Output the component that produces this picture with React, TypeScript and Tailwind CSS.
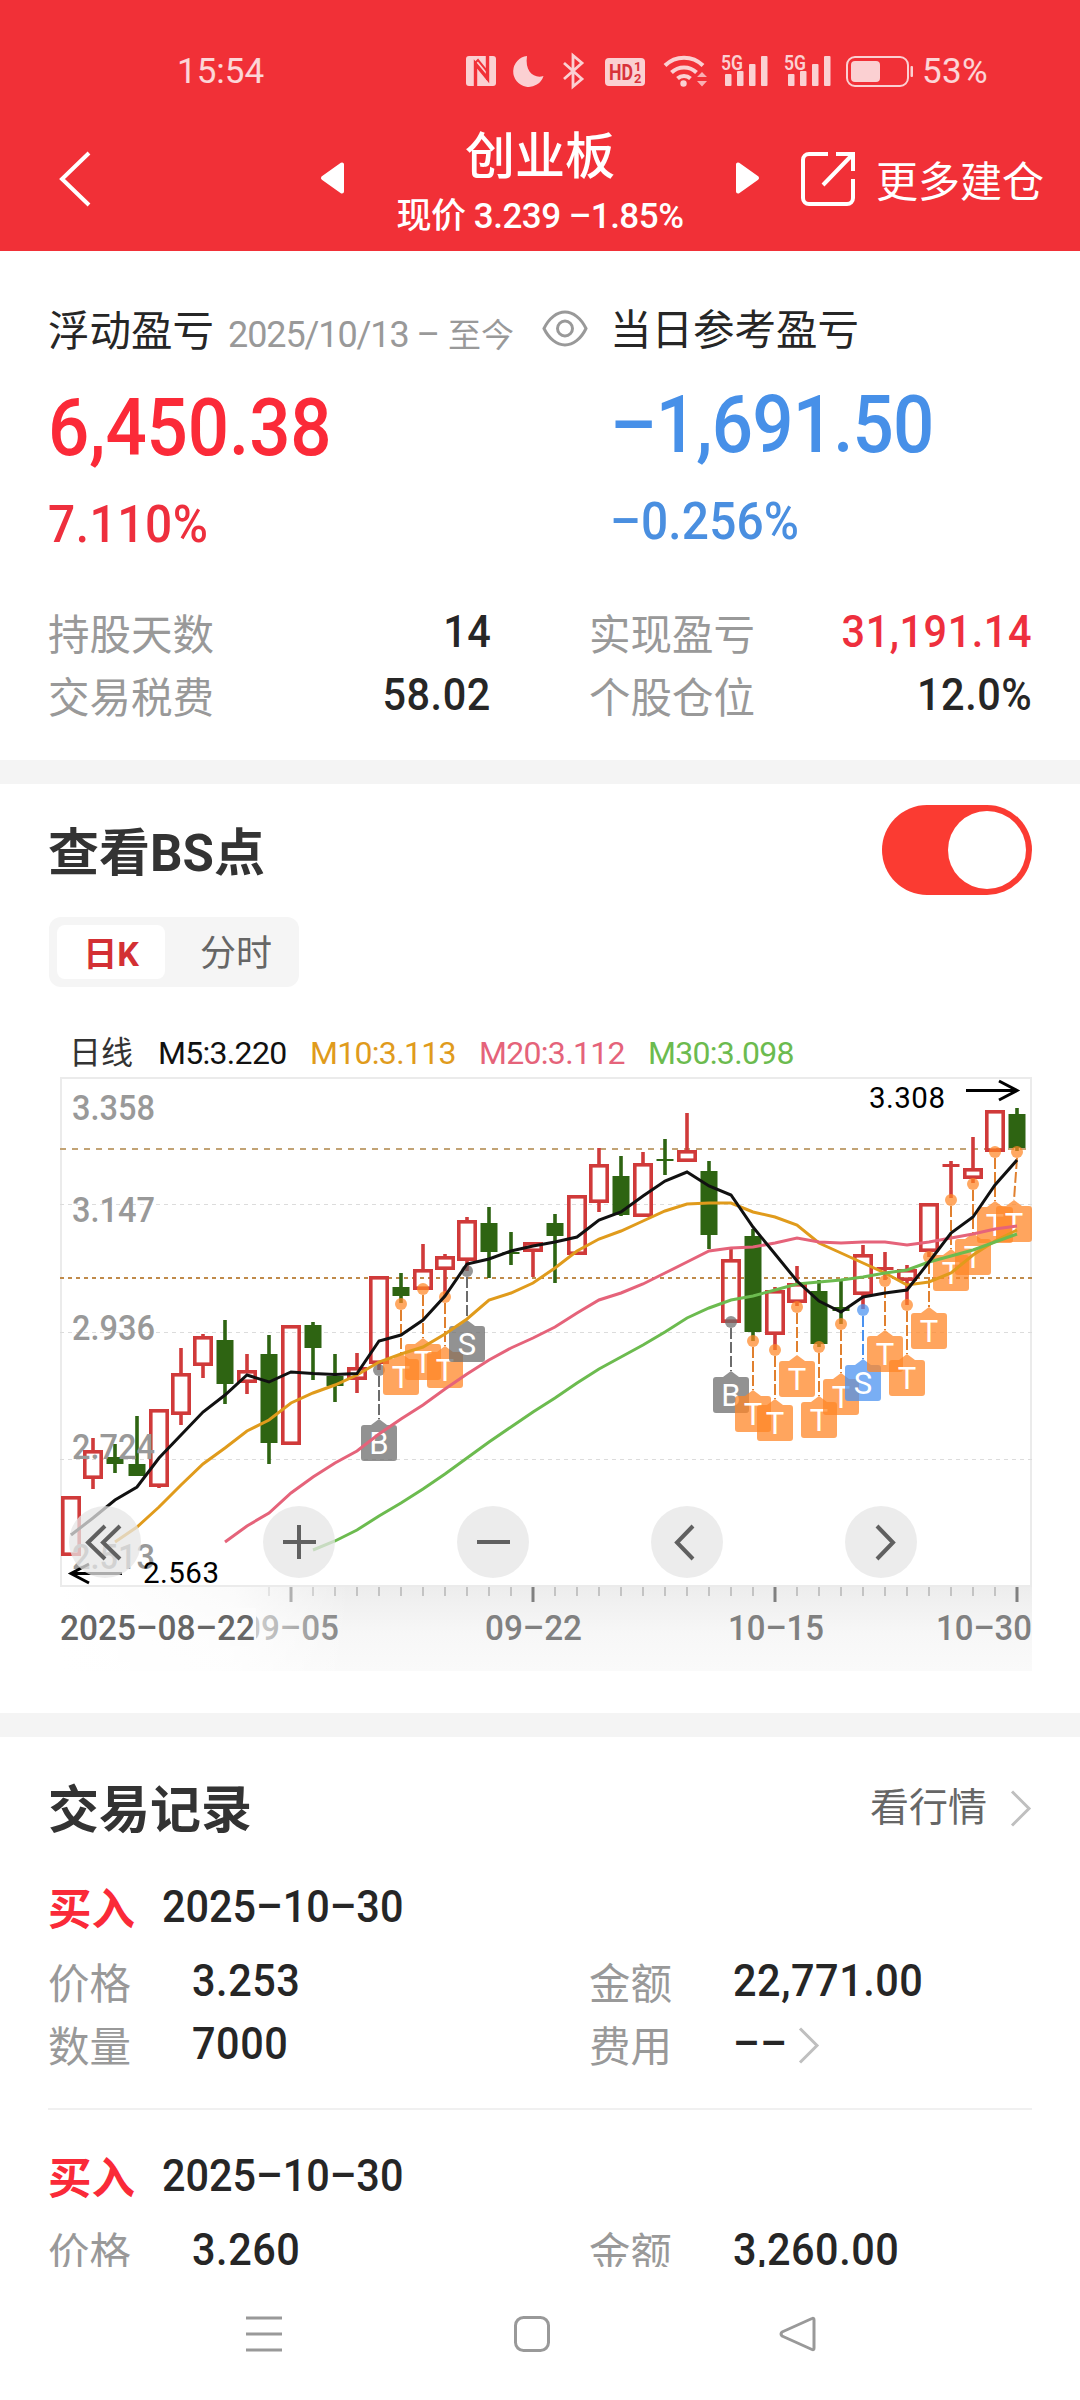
type Candle = {
  up: boolean;
  high: number;
  top: number;
  bottom: number;
  low: number;
};

const up = (high: number, top: number, bottom: number, low: number): Candle => ({ up: true, high, top, bottom, low });
const down = (high: number, top: number, bottom: number, low: number): Candle => ({ up: false, high, top, bottom, low });

// all chart values are y positions on the chart canvas
const candles: Candle[] = [
  up(1496, 1496, 1556, 1556),
  up(1438, 1450, 1479, 1489),
  down(1444, 1457, 1464, 1473),
  down(1416, 1464, 1476, 1476),
  up(1409, 1409, 1487, 1488),
  up(1348, 1373, 1415, 1425),
  up(1334, 1336, 1366, 1378),
  down(1320, 1340, 1384, 1404),
  up(1354, 1370, 1383, 1394),
  down(1335, 1354, 1443, 1464),
  up(1325, 1325, 1445, 1445),
  down(1322, 1325, 1348, 1380),
  down(1354, 1376, 1386, 1402),
  up(1353, 1367, 1380, 1393),
  up(1276, 1276, 1364, 1370),
  down(1273, 1287, 1296, 1303),
  up(1244, 1269, 1290, 1290),
  up(1254, 1256, 1270, 1296),
  up(1217, 1220, 1261, 1271),
  down(1207, 1223, 1252, 1278),
  down(1232, 1252, 1254, 1265),
  up(1242, 1242, 1252, 1277),
  down(1214, 1223, 1236, 1283),
  up(1195, 1195, 1255, 1255),
  up(1148, 1164, 1203, 1212),
  down(1156, 1176, 1215, 1216),
  up(1152, 1163, 1217, 1217),
  down(1139, 1159, 1161, 1175),
  up(1113, 1150, 1162, 1162),
  down(1161, 1171, 1235, 1249),
  up(1249, 1259, 1323, 1323),
  down(1229, 1236, 1332, 1341),
  up(1287, 1290, 1335, 1350),
  up(1266, 1283, 1303, 1306),
  down(1280, 1291, 1344, 1347),
  down(1280, 1307, 1311, 1324),
  up(1245, 1254, 1295, 1309),
  up(1252, 1267, 1270, 1280),
  up(1265, 1269, 1281, 1305),
  up(1203, 1203, 1252, 1257),
  up(1161, 1164, 1167, 1198),
  up(1137, 1168, 1179, 1183),
  up(1110, 1110, 1152, 1152),
  down(1108, 1114, 1148, 1151),
];

const averages = [
  {
    color: "#e09b1c",
    start: 2,
    values: [
      1542, 1527, 1507, 1485, 1464, 1448, 1431, 1420, 1403, 1393, 1385, 1375, 1362, 1354, 1347, 1334, 1319, 1300, 1293,
      1283, 1268, 1251, 1239, 1231, 1221, 1211, 1204, 1203, 1203, 1212, 1217, 1225, 1243, 1253, 1263, 1273, 1285, 1282,
      1273, 1255, 1241, 1230,
    ],
  },
  {
    color: "#e5637a",
    start: 7,
    values: [
      1542, 1526, 1513, 1493, 1477, 1463, 1451, 1434, 1419, 1405, 1389, 1374, 1360, 1348, 1338, 1327, 1313, 1300, 1293,
      1284, 1273, 1262, 1251, 1248, 1247, 1243, 1238, 1242, 1243, 1242, 1242, 1245, 1242, 1238, 1234, 1229, 1226,
    ],
  },
  {
    color: "#6cbb4f",
    start: 11,
    values: [
      1550, 1541, 1530, 1516, 1503, 1489, 1474, 1458, 1442, 1427, 1412, 1398, 1383, 1369, 1357, 1345, 1332, 1318, 1308,
      1300, 1296, 1290, 1284, 1282, 1280, 1277, 1273, 1270, 1262, 1256, 1250, 1242, 1234,
    ],
  },
  {
    color: "#111111",
    start: 0,
    values: [
      1535, 1518, 1500, 1487, 1458, 1435, 1412, 1395, 1375, 1382, 1372, 1373.5, 1374.5, 1373.5, 1341, 1335, 1320, 1296,
      1264, 1259, 1251, 1246, 1242, 1237, 1220, 1212, 1196, 1181, 1172, 1186, 1195, 1227, 1254, 1281, 1301, 1312, 1297,
      1293, 1290, 1262, 1233, 1217, 1185, 1160,
    ],
  },
];

const ORANGE = "#ff8626";
const GRAY = "#6c6c6c";
const BLUE = "#4a92f0";

const markers = [
  { i: 14, label: "B", color: GRAY, dot: 1370, box: 1425 },
  { i: 15, label: "T", color: ORANGE, dot: 1304, box: 1359 },
  { i: 16, label: "T", color: ORANGE, dot: 1289, box: 1344 },
  { i: 17, label: "T", color: ORANGE, dot: 1297, box: 1352 },
  { i: 18, label: "S", color: GRAY, dot: 1271, box: 1326 },
  { i: 30, label: "B", color: GRAY, dot: 1322, box: 1377 },
  { i: 31, label: "T", color: ORANGE, dot: 1341, box: 1396 },
  { i: 32, label: "T", color: ORANGE, dot: 1350, box: 1405 },
  { i: 33, label: "T", color: ORANGE, dot: 1307, box: 1361 },
  { i: 34, label: "T", color: ORANGE, dot: 1347, box: 1402 },
  { i: 35, label: "T", color: ORANGE, dot: 1324, box: 1379 },
  { i: 36, label: "S", color: BLUE, dot: 1310, box: 1365 },
  { i: 37, label: "T", color: ORANGE, dot: 1281, box: 1336 },
  { i: 38, label: "T", color: ORANGE, dot: 1305, box: 1360 },
  { i: 39, label: "T", color: ORANGE, dot: 1257, box: 1313 },
  { i: 40, label: "T", color: ORANGE, dot: 1200, box: 1255 },
  { i: 41, label: "T", color: ORANGE, dot: 1184, box: 1239 },
  { i: 42, label: "T", color: ORANGE, dot: 1152, box: 1207 },
  { i: 43, label: "T", color: ORANGE, dot: 1152, box: 1206, shift: -3 },
];

const scaleLabels = [
  { text: "3.358", y: 1120 },
  { text: "3.147", y: 1222 },
  { text: "2.936", y: 1340 },
  { text: "2.724", y: 1459 },
  { text: "2.513", y: 1569 },
];

const legend = [
  { text: "M5:3.220", style: "text-[#111] w-[152px]" },
  { text: "M10:3.113", style: "text-[#e09b1c] w-[169px]" },
  { text: "M20:3.112", style: "text-[#e5637a] w-[169px]" },
  { text: "M30:3.098", style: "text-[#6cbb4f]" },
];

const xOf = (i: number) => 71 + i * 22;

function StatusBar() {
  return (
    <div className="flex h-[94px] items-end pl-[177px] text-[35px] leading-[44px] text-white/80">
      <span className="w-[283px]">15:54</span>
      <svg width="462" height="44" viewBox="460 50 462 44" fill="#fbd0d2">
        {/* nfc */}
        <rect x="466" y="56" width="30" height="30" rx="3" />
        <path d="M475.500 86V64l12 14.500V56" fill="none" stroke="#f13037" strokeWidth="3.400" />
        <path d="M475 63l3-3 9 11v9" fill="none" stroke="#f13037" strokeWidth="2" />
        {/* do not disturb */}
        <path d="M527 56a15.500 15.500 0 1 0 16.500 20c-9 3-19-4-16.500-20z" />
        {/* bluetooth */}
        <path d="M564 63l18 16-9 7.500V55.500l9 7.500-18 16" fill="none" stroke="#fbd0d2" strokeWidth="2.800" />
        {/* hd voice */}
        <rect x="605" y="58" width="40" height="28" rx="4" />
        <text x="609" y="80" fontSize="22" fontWeight="700" fill="#d8323a" textLength="24" lengthAdjust="spacingAndGlyphs">HD</text>
        <text x="634" y="71" fontSize="13" fontWeight="700" fill="#d8323a">1</text>
        <text x="634" y="83" fontSize="13" fontWeight="700" fill="#d8323a">2</text>
        {/* wifi */}
        <g fill="none" stroke="#fbd0d2" strokeWidth="4">
          <path d="M665 65.500a27 27 0 0 1 38 0" />
          <path d="M671.500 72.500a18 18 0 0 1 25 0" />
          <path d="M677.500 78.500a9.500 9.500 0 0 1 13 0" />
        </g>
        <circle cx="683.500" cy="83.500" r="3.200" />
        <path d="M697 77l5-5 5 5zM697 81l5 5.500 5-5.500z" opacity=".8" />
        {/* two sims */}
        {[721, 784].map((x) => (
          <g key={x}>
            <text x={x} y="69.500" fontSize="21" fontWeight="600" textLength="22" lengthAdjust="spacingAndGlyphs">5G</text>
            <rect x={x + 4} y="74" width="6.500" height="12" rx="1" />
            <rect x={x + 16} y="71" width="6.500" height="15" rx="1" />
            <rect x={x + 28} y="64" width="6.500" height="22" rx="1" />
            <rect x={x + 40} y="56" width="6.500" height="30" rx="1" />
          </g>
        ))}
        {/* battery */}
        <rect x="847" y="57" width="61" height="29" rx="8" fill="none" stroke="#fbd0d2" strokeWidth="2" />
        <rect x="851" y="61" width="29" height="21" rx="4" />
        <rect x="910.500" y="66" width="2.500" height="11" rx="1" />
      </svg>
      <span className="tracking-[0.3px]">53%</span>
    </div>
  );
}

function Header() {
  return (
    <header className="h-[251px] bg-[#f13037] text-white">
      <StatusBar />
      <div className="flex h-[157px] items-start">
        <svg className="mt-[57px] ml-[58px] shrink-0" width="34" height="56" viewBox="0 0 34 56" fill="none" stroke="#fff" strokeWidth="4">
          <path d="M31 2L4 28l27 26" />
        </svg>
        <svg className="mt-[67px] ml-[227px] shrink-0" width="28" height="34" viewBox="0 0 28 34">
          <path d="M23 3.500v27L4 17z" fill="#fff" stroke="#fff" strokeWidth="4" strokeLinejoin="round" />
        </svg>
        <div className="w-[386px] shrink-0 text-center">
          <div className="mt-[33px] text-[50px] leading-[60px] font-medium">创业板</div>
          <div className="mt-[10px] text-[35px] leading-[40px] font-medium tracking-[-0.5px]">现价 3.239 –1.85%</div>
        </div>
        <svg className="mt-[67px] shrink-0" width="28" height="34" viewBox="0 0 28 34">
          <path d="M5 3.500v27L24 17z" fill="#fff" stroke="#fff" strokeWidth="4" strokeLinejoin="round" />
        </svg>
        <svg className="mt-[57px] ml-[39px] shrink-0" width="56" height="56" viewBox="0 0 56 56" fill="none" stroke="#fff" strokeWidth="4">
          <path d="M28 3H9a6 6 0 0 0-6 6v38a6 6 0 0 0 6 6h38a6 6 0 0 0 6-6V28" />
          <path d="M36 3h17v17M53 3L23 34" />
        </svg>
        <span className="mt-[61px] ml-[20px] text-[42px] leading-[56px] whitespace-nowrap">更多建仓</span>
      </div>
    </header>
  );
}

function Stat({ label, value, tone }: { label: string; value: string; tone?: string }) {
  return (
    <div className="flex h-[63px] items-start justify-between">
      <span className="text-[41.5px] leading-[72px] text-[#999]">{label}</span>
      <span
        className={`origin-right scale-x-92 text-[45px] leading-[63px] font-medium tracking-[0.6px] ${tone ?? "text-[#262626]"}`}
      >
        {value}
      </span>
    </div>
  );
}

function Summary() {
  return (
    <section className="h-[509px] pt-[51px]">
      <div className="flex h-[298px] pl-[48px]">
        <div className="w-[562px]">
          <div className="flex h-[60px] items-start whitespace-nowrap">
            <span className="text-[41.5px] leading-[59px] text-[#262626]">浮动盈亏</span>
            <span className="ml-[14px] text-[36px] leading-[67px] tracking-[-1.1px] text-[#999]">2025/10/13 – </span>
            <span className="ml-[9px] text-[33px] leading-[68px] text-[#999]">至今</span>
            <svg className="mt-[8px] ml-[28px]" width="46" height="37" viewBox="0 0 46 37" fill="none" stroke="#999" strokeWidth="3">
              <path d="M2 18.500C7 8 15 2 23 2s16 6 21 16.500C39 29 31 35 23 35S7 29 2 18.500z" />
              <circle cx="23" cy="18.500" r="7.500" />
            </svg>
          </div>
          <div className="mt-[21px] origin-left scale-x-92 text-[79px] leading-[90px] font-medium tracking-[-0.1px] text-[#fb2a38]">
            6,450.38
          </div>
          <div className="mt-[22px] origin-left scale-x-92 text-[52px] leading-[60px] font-medium tracking-[0.6px] text-[#ee2f3d]">
            7.110%
          </div>
        </div>
        <div>
          <div className="text-[41.5px] leading-[58px] text-[#262626]">当日参考盈亏</div>
          <div className="mt-[20px] origin-left scale-x-92 text-[79px] leading-[90px] font-medium tracking-[-0.9px] text-[#4790e8]">
            –1,691.50
          </div>
          <div className="mt-[22px] origin-left scale-x-92 text-[52px] leading-[60px] font-medium tracking-[0.2px] text-[#4a8fe0]">
            –0.256%
          </div>
        </div>
      </div>
      <div className="grid grid-cols-2 gap-x-[98px] px-[48px]">
        <Stat label="持股天数" value="14" />
        <Stat label="实现盈亏" value="31,191.14" tone="text-[#ee2f3d]" />
        <Stat label="交易税费" value="58.02" />
        <Stat label="个股仓位" value="12.0%" />
      </div>
    </section>
  );
}

function Marker({ i, label, color, dot, box, shift = 0 }: (typeof markers)[number]) {
  const x = xOf(i);
  const cx = x + shift;
  return (
    <g>
      <line x1={x} y1={dot + 6} x2={cx} y2={box - 6} stroke={color === ORANGE ? "#e0802f" : color} strokeWidth="2" strokeDasharray="11 3" />
      <circle cx={x} cy={dot} r="6" fill={color} opacity=".72" />
      <path
        d={`M${cx - 15} ${box}h7l8-6 8 6h7q3 0 3 3v30q0 3-3 3h-30q-3 0-3-3v-30q0-3 3-3z`}
        fill={color}
        opacity=".74"
      />
      <text x={cx} y={box + 29} fontSize="31" fill="#fff" textAnchor="middle">
        {label}
      </text>
    </g>
  );
}

function KLineChart() {
  return (
    <svg className="block" width="1080" height="599" viewBox="0 1075 1080 599">
      <defs>
        <linearGradient id="axis" x1="0" y1="0" x2="0" y2="1">
          <stop offset="0" stopColor="#ededed" />
          <stop offset=".55" stopColor="#f7f7f7" />
          <stop offset="1" stopColor="#fafafa" />
        </linearGradient>
        <linearGradient id="axisFade" x1="0" y1="0" x2="1" y2="0">
          <stop offset="0" stopColor="#fff" />
          <stop offset=".6" stopColor="#fff" stopOpacity=".75" />
          <stop offset="1" stopColor="#fff" stopOpacity="0" />
        </linearGradient>
      </defs>

      <rect x="61" y="1078" width="970" height="508" fill="none" stroke="#ebebeb" strokeWidth="2" />
      {[1204, 1332, 1459].map((y) => (
        <line key={y} x1="60" x2="1032" y1={y + 0.5} y2={y + 0.5} stroke="#dcdcdc" strokeDasharray="4 4" />
      ))}
      <line x1="60" x2="1032" y1="1149" y2="1149" stroke="#c2a375" strokeWidth="2" strokeDasharray="6 6" />
      <line x1="60" x2="1032" y1="1278" y2="1278" stroke="#c08a4a" strokeWidth="2" strokeDasharray="4 4" />

      {candles.map((c, i) => {
        const x = xOf(i);
        const color = c.up ? "#d03a3a" : "#2e6412";
        const thin = c.bottom - c.top <= 3;
        return (
          <g key={i} stroke={color} strokeWidth="3.600">
            {c.high < c.top && <line x1={x} x2={x} y1={c.high} y2={c.top + 1} />}
            {c.low > c.bottom && <line x1={x} x2={x} y1={c.bottom - 1} y2={c.low} />}
            {c.up && !thin ? (
              <rect x={x - 8.2} y={c.top + 1.8} width="16.400" height={c.bottom - c.top - 3.6} fill="none" />
            ) : (
              <rect x={x - 8.5} y={c.top} width="17" height={c.bottom - c.top} fill={color} stroke="none" />
            )}
          </g>
        );
      })}

      {markers.map((m) => (
        <Marker key={m.i} {...m} />
      ))}

      {averages.map((a) => (
        <polyline
          key={a.color}
          points={a.values.map((v, n) => `${xOf(a.start + n)},${v}`).join(" ")}
          fill="none"
          stroke={a.color}
          strokeWidth="3"
        />
      ))}

      {scaleLabels.map((l) => (
        <text key={l.text} x="72" y={l.y} fontSize="35" fontWeight="500" fill="#999" textLength="83" lengthAdjust="spacingAndGlyphs">
          {l.text}
        </text>
      ))}

      {/* period high and low */}
      <text x="869" y="1108" fontSize="29.500" textLength="76" fill="#000">3.308</text>
      <path d="M966 1090.500h50M999 1081l18 9.500-18 9.500" fill="none" stroke="#000" strokeWidth="3" />
      <text x="143" y="1582.500" fontSize="29.500" textLength="76" fill="#000">2.563</text>
      <path d="M122 1573.500H72M89 1564l-18 9.500 18 9.500" fill="none" stroke="#000" strokeWidth="3" />

      {/* date axis */}
      <rect x="60" y="1587" width="972" height="84" fill="url(#axis)" />
      {candles.map((_, i) => {
        const major = i % 11 === 10;
        return i < 9 ? null : (
          <line
            key={i}
            x1={xOf(i)}
            x2={xOf(i)}
            y1="1587"
            y2={major ? 1602 : 1596}
            stroke={major ? "#808080" : "#999"}
            strokeWidth={major ? 3 : 1}
          />
        );
      })}
      <g fontSize="35" fontWeight="500" fill="#808080">
        <text x="242" y="1640" textLength="97" lengthAdjust="spacingAndGlyphs">09–05</text>
        <text x="485" y="1640" textLength="97" lengthAdjust="spacingAndGlyphs">09–22</text>
        <text x="728" y="1640" textLength="96" lengthAdjust="spacingAndGlyphs">10–15</text>
        <text x="936" y="1640" textLength="96" lengthAdjust="spacingAndGlyphs">10–30</text>
      </g>
      <rect x="60" y="1587" width="290" height="84" fill="url(#axisFade)" />
      {/* keeps the first date readable over its neighbour */}
      <rect x="230" y="1608" width="26" height="38" fill="#fcfcfc" />
      <text x="60" y="1640" fontSize="35" fontWeight="500" fill="#666" textLength="195" lengthAdjust="spacingAndGlyphs">
        2025–08–22
      </text>

      {/* floating controls */}
      {[105, 299, 493, 687, 881].map((x) => (
        <circle key={x} cx={x} cy="1542" r="36" fill="#e6e6e6" opacity=".75" />
      ))}
      <g fill="none" stroke="#606060" strokeWidth="4">
        <path d="M105 1526l-17 16.500 17 16.500M120 1526l-17 16.500 17 16.500" />
        <path d="M283 1542h33M299 1525v34" />
        <path d="M477 1542h33" />
        <path d="M693 1526l-16 16.500 16 16.500" />
        <path d="M877 1526l16 16.500-16 16.500" />
      </g>
    </svg>
  );
}

function BsChart() {
  return (
    <section className="h-[929px]">
      <div className="flex h-[133px] items-start justify-between px-[48px] pt-[21px]">
        <h2 className="mt-[19px] text-[51px] leading-[60px] font-bold text-[#333]">查看BS点</h2>
        <div className="flex h-[90px] w-[150px] justify-end rounded-full bg-[#fb3b32] p-[6px]">
          <div className="size-[78px] rounded-full bg-white" />
        </div>
      </div>
      <div className="ml-[49px] flex h-[70px] w-[250px] rounded-xl bg-[#f5f5f5] p-2">
        <div className="w-[108px] rounded-lg bg-white text-center text-[34px] leading-[58px] font-bold text-[#d33034]">日K</div>
        <div className="flex-1 pl-[16px] text-center text-[36px] leading-[58px] text-[#666]">分时</div>
      </div>
      <div className="flex h-[88px] items-start pt-[43px] pl-[69px] text-[32px] leading-[47px] whitespace-nowrap">
        <span className="w-[89px] text-[#333]">日线</span>
        {legend.map((l) => (
          <span key={l.text} className={`shrink-0 tracking-[-0.7px] ${l.style}`}>
            {l.text}
          </span>
        ))}
      </div>
      <KLineChart />
    </section>
  );
}

function Chevron() {
  return (
    <svg width="22" height="37" viewBox="0 0 22 37" fill="none" stroke="#bfbfbf" strokeWidth="3">
      <path d="M2 1.500l17 17-17 17" />
    </svg>
  );
}

function Field({ label, value, arrow }: { label: string; value: string; arrow?: boolean }) {
  return (
    <div className="flex h-[63px] items-start">
      <span className="w-[144px] text-[41.5px] leading-[70px] text-[#999]">{label}</span>
      <span className="origin-left scale-x-92 text-[45px] leading-[62px] font-medium tracking-[0.6px] text-[#262626]">{value}</span>
      {arrow && (
        <span className="mt-[14px] ml-[6px]">
          <Chevron />
        </span>
      )}
    </div>
  );
}

function Trade({ price, amount, quantity }: { price: string; amount: string; quantity: string }) {
  return (
    <div className="h-[269px] shrink-0">
      <div className="flex h-[74px] items-start">
        <span className="w-[114px] text-[43.5px] leading-[69px] font-bold text-[#fa2a38]">买入</span>
        <span className="origin-left scale-x-92 text-[45px] leading-[61px] font-medium text-[#262626]">2025–10–30</span>
      </div>
      <div className="grid grid-cols-2 gap-x-[98px]">
        <Field label="价格" value={price} />
        <Field label="金额" value={amount} />
        <Field label="数量" value={quantity} />
        <Field label="费用" value="––" arrow />
      </div>
    </div>
  );
}

function Trades() {
  return (
    <section className="h-[530px] overflow-hidden px-[48px]">
      <div className="flex h-[139px] items-start justify-between pt-[42px]">
        <h2 className="text-[51px] leading-[64px] font-bold text-[#333]">交易记录</h2>
        <div className="flex items-center gap-[23px] text-[39px] leading-[58px] text-[#666]">
          看行情
          <Chevron />
        </div>
      </div>
      <div className="h-[234px] border-b-2 border-[#f0f0f0]">
        <Trade price="3.253" amount="22,771.00" quantity="7000" />
      </div>
      <div className="pt-[35px]">
        <Trade price="3.260" amount="3,260.00" quantity="1000" />
      </div>
    </section>
  );
}

function NavBar() {
  return (
    <nav className="flex h-[133px] items-start bg-white pt-[48px]">
      <svg className="ml-[245px]" width="38" height="38" viewBox="0 0 38 38" stroke="#999" strokeWidth="3">
        <path d="M1 3h36M1 19h36M1 35h36" />
      </svg>
      <svg className="ml-[230px]" width="38" height="38" viewBox="0 0 38 38" fill="none" stroke="#999" strokeWidth="3">
        <rect x="2.500" y="2.500" width="33" height="33" rx="8" />
      </svg>
      <svg className="ml-[228px]" width="38" height="38" viewBox="0 0 38 38" fill="none" stroke="#999" strokeWidth="3" strokeLinejoin="round">
        <path d="M33 3.500q2-1 2 1.500v28q0 2.500-2 1.500L3 21q-2-2 0-4z" />
      </svg>
    </nav>
  );
}

export default function App() {
  return (
    <div className="h-[2400px] w-[1080px] overflow-hidden bg-white font-['Roboto','Noto_Sans_CJK_SC',sans-serif]">
      <Header />
      <Summary />
      <div className="h-[24px] bg-[#f4f4f4]" />
      <BsChart />
      <div className="h-[24px] bg-[#f4f4f4]" />
      <Trades />
      <NavBar />
    </div>
  );
}
